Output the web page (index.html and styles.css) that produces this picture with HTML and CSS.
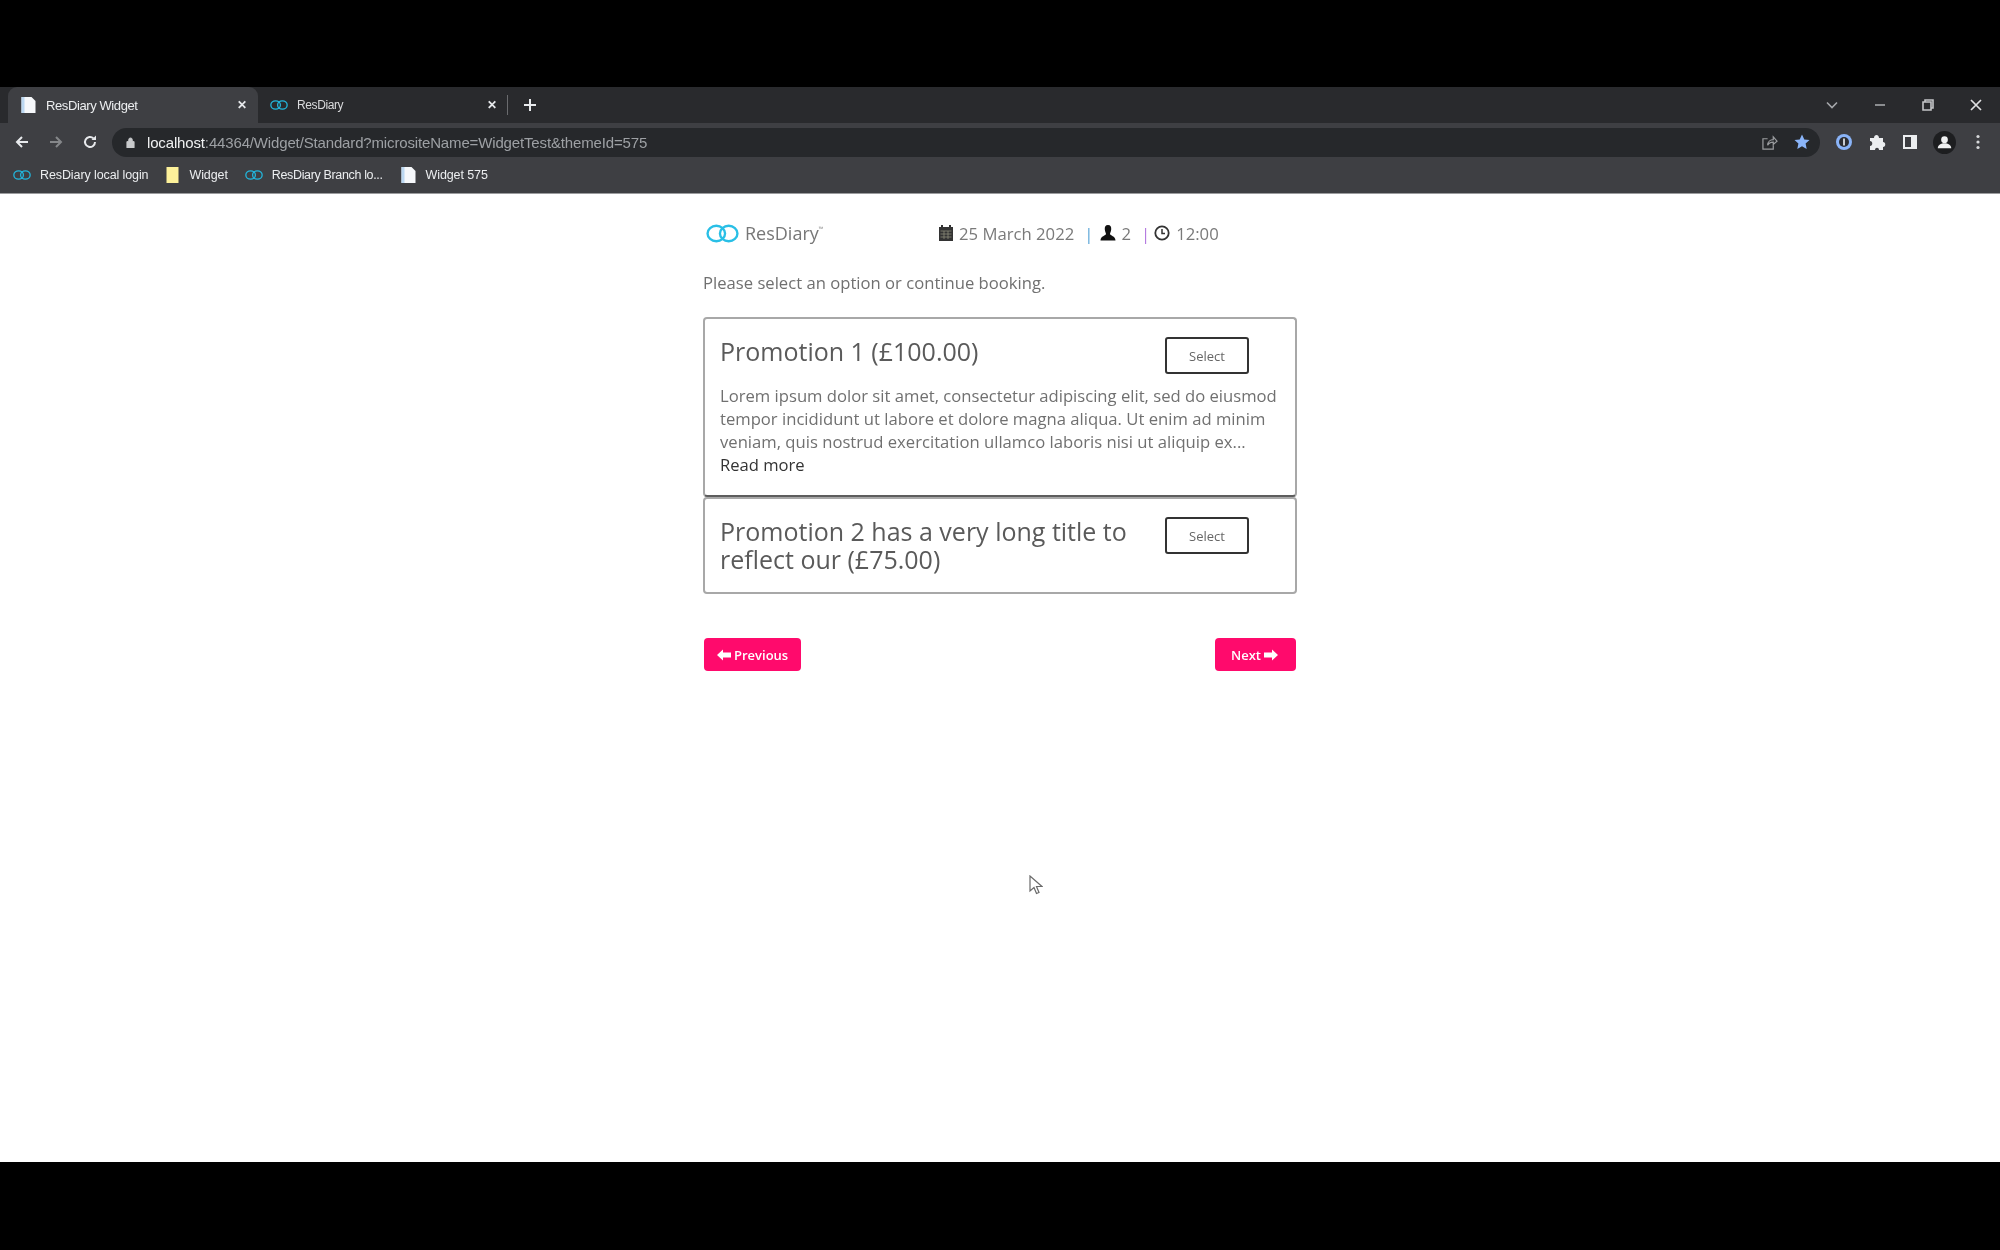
FILE: index.html
```html
<!DOCTYPE html>
<html lang="en">
<head>
    <meta charset="UTF-8">
    <title>ResDiary Widget</title>
    <link rel="stylesheet" href="styles.css">
</head>
<body>
    <svg class="defs" width="0" height="0">
        <symbol id="rd" viewBox="0 0 32 18">
            <ellipse cx="10" cy="9" rx="8.500" ry="7.500" fill="none" stroke="currentColor" stroke-width="2.300"/>
            <ellipse cx="22" cy="9" rx="8.500" ry="7.500" fill="none" stroke="currentColor" stroke-width="2.300"/>
        </symbol>
        <symbol id="page" viewBox="0 0 16 18">
            <path d="M1 1h10l4 4v12H1z" fill="currentColor"/>
            <path d="M1 1h3v16H1z" fill="#bcd8f2"/>
        </symbol>
        <symbol id="arrow" viewBox="0 0 14 12">
            <path d="M0 6 6 .5V3.500h8v5H6v3z" fill="currentColor"/>
        </symbol>
    </svg>

    <div class="bar-black top"></div>

    <header class="browser">
        <div class="tabstrip">
            <div class="tab active">
                <svg class="ico-page"><use href="#page"/></svg>
                <span class="tab-title">ResDiary Widget</span>
                <span class="tab-x">✕</span>
            </div>
            <div class="tab">
                <svg class="ico-rd"><use href="#rd"/></svg>
                <span class="tab-title">ResDiary</span>
                <span class="tab-x">✕</span>
            </div>
            <div class="tab-sep"></div>
            <svg class="new-tab" viewBox="0 0 14 14"><path d="M7 1v12M1 7h12" stroke="#e8eaed" stroke-width="2"/></svg>
            <div class="win-ctrl">
                <svg viewBox="0 0 14 14"><path d="M2 4.500l5 5 5-5" fill="none" stroke="#a5a7aa" stroke-width="1.600"/></svg>
                <svg viewBox="0 0 14 14"><path d="M2 7h10" stroke="#a5a7aa" stroke-width="1.600"/></svg>
                <svg viewBox="0 0 14 14"><path d="M4 4V2h8v8h-2M2 4h8v8H2z" fill="none" stroke="#c4c5c7" stroke-width="1.600"/></svg>
                <svg viewBox="0 0 14 14"><path d="M2 2l10 10M12 2L2 12" stroke="#dfe0e2" stroke-width="1.700"/></svg>
            </div>
        </div>
        <div class="toolbar">
            <div class="nav-btns">
                <svg viewBox="0 0 16 16"><path d="M14 8H3M8 3 3 8l5 5" fill="none" stroke="#e8eaed" stroke-width="2"/></svg>
                <svg viewBox="0 0 16 16"><path d="M2 8h11M8 3l5 5-5 5" fill="none" stroke="#85878a" stroke-width="2"/></svg>
                <svg viewBox="0 0 16 16"><path d="M13 8a5 5 0 1 1-1.500-3.600" fill="none" stroke="#e8eaed" stroke-width="2"/><path d="M14 1.500V6H9.500z" fill="#e8eaed"/></svg>
            </div>
            <div class="omnibox">
                <svg class="lock" viewBox="0 0 10 12"><path d="M1 5h8v7H1zM3 5V3a2 2 0 0 1 4 0v2" fill="#c8cacc" stroke="#c8cacc"/></svg>
                <span class="url"><b>localhost</b>:44364/Widget/Standard?micrositeName=WidgetTest&amp;themeId=575</span>
                <svg class="share" viewBox="0 0 18 16"><path d="M7 4H2v11h11v-4M7 11c0-4 3-6 6-6V2l4 4.500L13 10V7.500c-3 0-5 1-6 3.500z" fill="none" stroke="#9a9c9f" stroke-width="1.300"/></svg>
                <svg class="star" viewBox="0 0 16 16"><path d="M8 .500l2.300 5 5.200.6-3.900 3.500 1.100 5.400L8 12.300 3.300 15l1.100-5.400L.500 6.100l5.200-.6z" fill="#8ab4f8"/></svg>
            </div>
            <div class="ext-btns">
                <svg viewBox="0 0 18 18"><circle cx="9" cy="9" r="8" fill="#8ab4f8"/><circle cx="9" cy="9" r="5" fill="#2d2e31"/><rect x="8" y="5.500" width="2" height="7" fill="#c9ccd0"/></svg>
                <svg viewBox="0 0 18 18"><path d="M2 5h4c0-4 5-4 5 0h4v4c3 0 3 5 0 5v3h-4c0-3-4-3-4 0H2v-4c3 0 3-5 0-5z" fill="#eceef0"/></svg>
                <svg viewBox="0 0 18 18"><path d="M2 2h14v14H2z" fill="#eceef0"/><path d="M4 4h6v10H4z" fill="#3b3c40"/></svg>
                <svg class="avatar" viewBox="0 0 24 24"><circle cx="12" cy="12" r="12" fill="#1d1e20"/><circle cx="12" cy="9" r="3.500" fill="#f0f1f2"/><path d="M5 18c0-7 14-7 14 0z" fill="#f0f1f2"/></svg>
                <svg viewBox="0 0 18 18"><circle cx="9" cy="3.500" r="1.600" fill="#d6d8da"/><circle cx="9" cy="9" r="1.600" fill="#d6d8da"/><circle cx="9" cy="14.500" r="1.600" fill="#d6d8da"/></svg>
            </div>
        </div>
        <div class="bookmarks">
            <span class="bm"><svg class="ico-rd"><use href="#rd"/></svg>ResDiary local login</span>
            <span class="bm"><svg class="ico-folder" viewBox="0 0 12 16"><path d="M0 0h12v16H0z" fill="#fdf19a"/></svg>Widget</span>
            <span class="bm tight"><svg class="ico-rd"><use href="#rd"/></svg>ResDiary Branch lo...</span>
            <span class="bm"><svg class="ico-page"><use href="#page"/></svg>Widget 575</span>
        </div>
    </header>

    <main class="page">
        <div class="widget">
            <div class="summary">
                <div class="logo">
                    <svg class="logo-mark"><use href="#rd"/></svg>
                    <span class="logo-text">ResDiary</span><span class="tm">™</span>
                </div>
                <div class="details">
                    <svg class="glyph" viewBox="0 0 16 16"><path d="M1 2h2V0h2v2h6V0h2v2h2v14H1z" fill="#333"/><path d="M2.500 6h11M2.500 9h11M2.500 12h11M6 6v8M10 6v8" stroke="#8a8a7a" stroke-width=".8"/></svg>
                    <span class="val">25 March 2022</span>
                    <span class="pipe blue">|</span>
                    <svg class="glyph" viewBox="0 0 16 16"><path d="M8 0c2.500 0 3.500 2 3.200 4.500C11 6.500 10 8 10 9c0 1.500 5.500 2 5.500 6.500H.5C.5 11 6 10.500 6 9c0-1-1-2.500-1.200-4.500C4.500 2 5.500 0 8 0z" fill="#111"/></svg>
                    <span class="val">2</span>
                    <span class="pipe purple">|</span>
                    <svg class="glyph clock" viewBox="0 0 16 16"><circle cx="8" cy="8" r="6.700" fill="none" stroke="#333" stroke-width="1.800"/><path d="M8 4v4.500h3" fill="none" stroke="#333" stroke-width="1.500"/></svg>
                    <span class="val">12:00</span>
                </div>
            </div>

            <p class="intro">Please select an option or continue booking.</p>

            <section class="promo first">
                <div class="promo-head">
                    <h2 class="promo-title">Promotion 1 (£100.00)</h2>
                    <button class="select-btn">Select</button>
                </div>
                <p class="promo-text">Lorem ipsum dolor sit amet, consectetur adipiscing elit, sed do eiusmod tempor incididunt ut labore et dolore magna aliqua. Ut enim ad minim veniam, quis nostrud exercitation ullamco laboris nisi ut aliquip ex...</p>
                <a class="read-more">Read more</a>
            </section>

            <section class="promo">
                <div class="promo-head">
                    <h2 class="promo-title">Promotion 2 has a very long title to reflect our (£75.00)</h2>
                    <button class="select-btn">Select</button>
                </div>
            </section>

            <div class="nav-row">
                <button class="nav-btn prev"><svg class="arrow"><use href="#arrow"/></svg>Previous</button>
                <button class="nav-btn next">Next<svg class="arrow flip"><use href="#arrow"/></svg></button>
            </div>
        </div>

        <svg class="cursor" viewBox="0 0 14 20"><path d="M1 1v15l4-3.500 2.500 6 2.500-1-2.500-6H13z" fill="#fff" stroke="#6a6a6a" stroke-width="1.200"/></svg>
    </main>

    <div class="bar-black bottom"></div>
</body>
</html>
```

FILE: styles.css
```css
*{
    margin: 0;
    box-sizing: border-box;
}

html, body{
    height: 100%;
    background: #000;
    overflow: hidden;
}

body{
    display: flex;
    flex-direction: column;
    font-family: "Open Sans", "Noto Sans", sans-serif;
    color: #555;
}

.defs{
    position: absolute;
}

.bar-black{
    background: #000;
    flex: none;
}
.bar-black.top{ height: 87px; }
.bar-black.bottom{ flex: 1; }

/* browser chrome */
.browser{
    flex: none;
    height: 107px;
    background: #3e3f43;
    border-bottom: 1px solid #9b9c9e;
    color: #e8eaed;
    filter: blur(.5px);
}

.tabstrip{
    height: 36px;
    background: #292a2d;
    display: flex;
    align-items: center;
    padding-left: 8px;
    position: relative;
}

.tab{
    width: 250px;
    height: 36px;
    display: flex;
    align-items: center;
    padding: 0 11px 0 12px;
    gap: 9px;
    font-family: "Liberation Sans", sans-serif;
    font-size: 12px;
    color: #d9dadc;
    border-radius: 9px 9px 0 0;
}
.tab.active{
    background: #3e3f43;
    color: #eceef0;
    font-size: 13px;
}

.tab-title{
    flex: 1;
    letter-spacing: -.4px;
}

.tab-x{
    font-size: 12px;
    font-weight: bold;
    color: #e8eaed;
}

.ico-page{
    width: 17px;
    height: 18px;
    color: #f6f8fb;
    flex: none;
}

.ico-rd{
    width: 18px;
    height: 12px;
    color: #22b6dc;
    flex: none;
}

.tab-sep{
    width: 1px;
    height: 20px;
    margin-left: -1px;
    background: #6a6b6e;
}

.new-tab{
    width: 14px;
    height: 14px;
    margin-left: 15px;
}

.win-ctrl{
    margin-left: auto;
    display: flex;
    align-items: center;
    gap: 34px;
    padding-right: 17px;
}
.win-ctrl svg{
    width: 14px;
    height: 14px;
}

.toolbar{
    height: 38px;
    display: flex;
    align-items: center;
    padding-left: 14px;
}

.nav-btns{
    display: flex;
    gap: 18px;
    width: 98px;
}
.nav-btns svg{
    width: 16px;
    height: 16px;
}

.omnibox{
    width: 1708px;
    height: 29px;
    border-radius: 15px;
    background: #26282b;
    display: flex;
    align-items: center;
    padding: 0 10px 0 14px;
    font-family: "Liberation Sans", sans-serif;
    font-size: 15px;
    color: #9da0a4;
}

.lock{
    width: 9px;
    height: 11px;
    margin-right: 12px;
}

.url{
    flex: 1;
    letter-spacing: -.15px;
}
.url b{
    font-weight: normal;
    color: #f0f1f2;
}

.share{
    width: 17px;
    height: 15px;
    margin-right: 16px;
}

.star{
    width: 16px;
    height: 16px;
}

.ext-btns{
    display: flex;
    align-items: center;
    gap: 15px;
    margin-left: 15px;
}
.ext-btns svg{
    width: 18px;
    height: 18px;
}
.ext-btns .avatar{
    width: 23px;
    height: 23px;
    margin: 0 -2px 0 -1px;
}

.bookmarks{
    height: 32px;
    display: flex;
    align-items: center;
    padding: 0 0 4px 13px;
    gap: 17px;
    font-family: "Liberation Sans", sans-serif;
    font-size: 12.500px;
    letter-spacing: -.1px;
    color: #eceef0;
}

.bm{
    display: flex;
    align-items: center;
    gap: 9px;
}
.bm.tight{
    letter-spacing: -.35px;
}

.ico-folder{
    width: 15px;
    height: 16px;
}

/* page */
.page{
    flex: none;
    height: 968px;
    background: #fff;
    position: relative;
}

.widget{
    width: 594px;
    margin-left: 703px;
    padding-top: 26px;
    filter: blur(.4px);
}

.summary{
    display: flex;
    align-items: center;
    height: 26px;
    padding-left: 3px;
}

.logo{
    display: flex;
    align-items: center;
    width: 232px;
}

.logo-mark{
    width: 33px;
    height: 19px;
    color: #29bfe6;
    margin-right: 6px;
}

.logo-text{
    font-size: 18px;
    color: #777;
}

.tm{
    font-size: 6px;
    margin-bottom: 8px;
    color: #888;
}

.details{
    display: flex;
    align-items: center;
    font-size: 16.700px;
    color: #7a7a7a;
}

.glyph{
    width: 16px;
    height: 16px;
    margin-right: 5px;
}
.glyph.clock{
    margin-right: 6px;
}

.val{
    margin-right: 10px;
}

.pipe{
    margin-right: 7px;
}
.pipe.blue{ color: #5aa6d8; }
.pipe.purple{
    margin-right: 4px;
    color: #b47ae0;
}

.intro{
    margin-top: 26px;
    font-size: 16.650px;
    line-height: 22px;
    color: #707070;
    margin-bottom: 23px;
}

.promo{
    border: 2px solid #a8a8a8;
    border-radius: 4px;
    padding: 18px 14px 19px 15px;
}
.promo.first{
    height: 180px;
    border-bottom-color: #5d5d5d;
}

.promo-head{
    display: flex;
    align-items: flex-start;
    justify-content: space-between;
}

.promo-title{
    width: 420px;
    font-size: 25px;
    line-height: 28px;
    font-weight: 400;
    color: #5a5a5a;
}

.select-btn{
    width: 84px;
    height: 37px;
    margin-right: 32px;
    background: #fff;
    border: 2px solid #333;
    border-radius: 3px;
    font-family: inherit;
    font-size: 13px;
    color: #666;
}

.promo-text{
    font-size: 16.650px;
    line-height: 23px;
    color: #707070;
    margin-top: 10px;
}

.read-more{
    display: block;
    font-size: 16.600px;
    line-height: 23px;
    font-weight: 500;
    color: #333;
}

.nav-row{
    display: flex;
    justify-content: space-between;
    margin-top: 44px;
}

.nav-btn{
    height: 33px;
    padding: 0 16px;
    display: flex;
    align-items: center;
    gap: 3px;
    background: #ff0a6c;
    border: none;
    border-radius: 4px;
    color: #fff;
    font-family: inherit;
    font-size: 13px;
    font-weight: 600;
}
.nav-btn.prev{
    width: 97px;
    margin-left: 1px;
    padding: 0 13px;
}
.nav-btn.next{
    width: 81px;
    margin-right: 1px;
}

.arrow{
    flex: none;
    width: 14px;
    height: 12px;
    color: #fff;
}
.arrow.flip{
    transform: scaleX(-1);
}

.cursor{
    position: absolute;
    left: 1029px;
    top: 681px;
    width: 14px;
    height: 20px;
}
```
